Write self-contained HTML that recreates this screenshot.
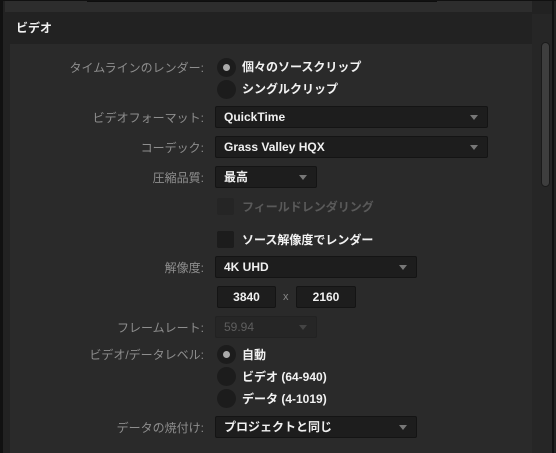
<!DOCTYPE html>
<html><head><meta charset="utf-8"><style>
*{box-sizing:border-box;margin:0;padding:0}
body{width:556px;height:453px;background:#222;position:relative;overflow:hidden;font-family:"Liberation Sans","Noto Sans CJK JP",sans-serif;font-size:12px;color:#fff}
.abs{position:absolute}
.lbl{position:absolute;right:352px;color:#8e8e8e;font-size:12px;line-height:14px;text-align:right;white-space:nowrap}
.dd{position:absolute;background:#1d1d1d;border:1px solid #141414;border-radius:2px;height:22px;color:#f0f0f0;font-weight:bold;font-size:12px;line-height:20px;padding-left:8px}
.dd .ar{position:absolute;right:9px;top:8px;width:0;height:0;border-left:4px solid transparent;border-right:4px solid transparent;border-top:5px solid #777}
.rad{position:absolute;left:217px;width:19px;height:19px;border-radius:50%;background:#1c1c1c}
.rad.on::after{content:"";position:absolute;left:6px;top:6px;width:7px;height:7px;border-radius:50%;background:#aaa}
.rt{position:absolute;left:242px;font-weight:bold;font-size:12px;line-height:14px;color:#f2f2f2;white-space:nowrap}
.cb{position:absolute;left:217px;width:17px;height:17px;background:#1c1c1c;border-radius:2px}
</style></head><body>
<div class="abs" style="left:0;top:0;width:3px;height:453px;background:#111"></div>
<div class="abs" style="left:552px;top:0;width:2px;height:453px;background:#111"></div>
<div class="abs" style="left:5px;top:0;width:527px;height:12px;background:#2d2d2d"></div>
<div class="abs" style="left:87px;top:0;width:350px;height:2px;background:#0e0e0e"></div>
<div class="abs" style="left:0;top:0;width:556px;height:1px;background:#111"></div>
<div class="abs" style="left:16px;top:21px;font-weight:bold;font-size:12px;line-height:14px;color:#f2f2f2">ビデオ</div>
<div class="abs" style="left:10px;top:44px;width:522px;height:409px;background:#2a2a2a"></div>
<div class="abs" style="left:532px;top:14px;width:20px;height:439px;background:#262626"></div>
<div class="abs" style="left:541px;top:42px;width:9px;height:145px;background:#3e3e3e;border:1px solid #1a1a1a;border-radius:5px"></div>

<div class="lbl" style="top:61px">タイムラインのレンダー:</div>
<div class="rad on" style="top:58px"></div><div class="rt" style="top:60px">個々のソースクリップ</div>
<div class="rad" style="top:80px"></div><div class="rt" style="top:82px">シングルクリップ</div>

<div class="lbl" style="top:111px">ビデオフォーマット:</div>
<div class="dd" style="left:215px;top:106px;width:273px">QuickTime<span class="ar"></span></div>

<div class="lbl" style="top:141px">コーデック:</div>
<div class="dd" style="left:215px;top:136px;width:273px">Grass Valley HQX<span class="ar"></span></div>

<div class="lbl" style="top:171px">圧縮品質:</div>
<div class="dd" style="left:215px;top:166px;width:102px">最高<span class="ar"></span></div>

<div class="cb" style="top:198px;background:#252525"></div>
<div class="rt" style="top:200px;color:#5a5a5a">フィールドレンダリング</div>
<div class="cb" style="top:231px"></div>
<div class="rt" style="top:233px">ソース解像度でレンダー</div>

<div class="lbl" style="top:261px">解像度:</div>
<div class="dd" style="left:215px;top:256px;width:202px">4K UHD<span class="ar"></span></div>
<div class="dd" style="left:217px;top:286px;width:59px;padding:0;text-align:center">3840</div>
<div class="abs" style="left:283px;top:291px;color:#888;font-size:11px">x</div>
<div class="dd" style="left:296px;top:286px;width:60px;padding:0;text-align:center">2160</div>

<div class="lbl" style="top:321px">フレームレート:</div>
<div class="dd" style="left:215px;top:316px;width:102px;background:#262626;border-color:#222;color:#5e5e5e;font-weight:normal">59.94<span class="ar" style="border-top-color:#444"></span></div>

<div class="lbl" style="top:348px">ビデオ/データレベル:</div>
<div class="rad on" style="top:345px"></div><div class="rt" style="top:348px">自動</div>
<div class="rad" style="top:367px"></div><div class="rt" style="top:370px">ビデオ (64-940)</div>
<div class="rad" style="top:389px"></div><div class="rt" style="top:392px">データ (4-1019)</div>

<div class="lbl" style="top:421px">データの焼付け:</div>
<div class="dd" style="left:215px;top:416px;width:202px">プロジェクトと同じ<span class="ar"></span></div>
</body></html>
